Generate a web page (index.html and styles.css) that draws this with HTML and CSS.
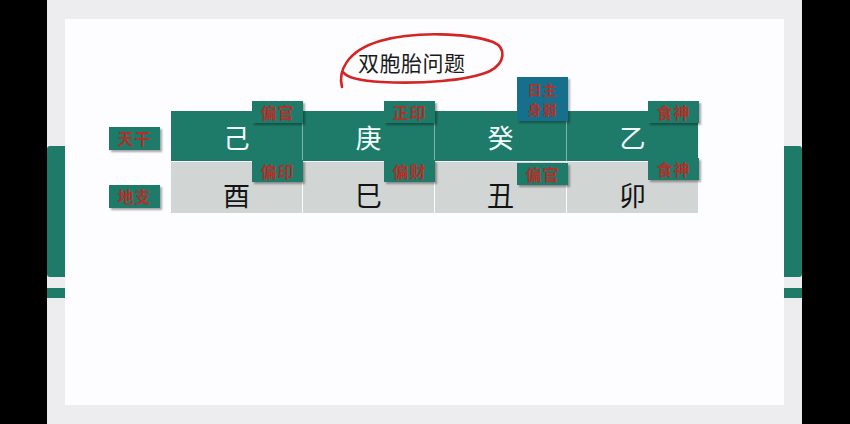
FILE: index.html
```html
<!DOCTYPE html>
<html lang="zh">
<head>
<meta charset="utf-8">
<title>双胞胎问题</title>
<link rel="stylesheet" href="styles.css">
</head>
<body>
<div class="frame">
  <div class="deco deco-left"></div>
  <div class="stripe stripe-left"></div>
  <div class="deco deco-right"></div>
  <div class="stripe stripe-right"></div>
  <div class="slide">
    <svg class="scribble" viewBox="65 19 719 386" width="719" height="386">
      <path d="M342,87 C338,72 346,51 380,41 C415,31 468,33 493,42 C507,48 505,63 490,71 C468,81 420,84 382,82 C362,81 347,78 343,72" fill="none" stroke="#d42525" stroke-width="2.6" stroke-linecap="round"/>
    </svg>
    <h1 class="title">双胞胎问题</h1>
    <div class="chart">
      <div class="row row-stem">
        <div class="label">天干</div>
        <div class="cells">
          <div class="cell">己<span class="badge">偏官</span></div>
          <div class="cell">庚<span class="badge">正印</span></div>
          <div class="cell">癸<span class="daymaster"><span class="dm-line">日主</span><span class="dm-line">身弱</span></span></div>
          <div class="cell">乙<span class="badge">食神</span></div>
        </div>
      </div>
      <div class="row row-branch">
        <div class="label">地支</div>
        <div class="cells">
          <div class="cell">酉<span class="badge badge-low">偏印</span></div>
          <div class="cell">巳<span class="badge badge-low">偏财</span></div>
          <div class="cell">丑<span class="badge badge-low badge-third">偏官</span></div>
          <div class="cell">卯<span class="badge badge-low badge-fourth">食神</span></div>
        </div>
      </div>
    </div>
  </div>
</div>
</body>
</html>
```

FILE: styles.css
```css
html, body {
  margin: 0;
  padding: 0;
  background: #000;
  width: 850px;
  height: 424px;
  overflow: hidden;
  font-family: "Noto Sans CJK SC", "Noto Sans", sans-serif;
}

.frame {
  position: relative;
  margin-left: 47px;
  width: 755px;
  height: 424px;
  background: #ededf0;
  padding: 19px 0 0 18px;
  box-sizing: border-box;
}

.deco {
  position: absolute;
  top: 146px;
  width: 18px;
  height: 131px;
  background: #1e7b69;
}
.deco-left {
  left: 0;
  border-radius: 3px 0 0 3px;
}
.deco-right {
  right: 0;
  border-radius: 0 3px 3px 0;
}

.stripe {
  position: absolute;
  top: 288px;
  width: 18px;
  height: 10px;
  background: #1e7b69;
}
.stripe-left { left: 0; }
.stripe-right { right: 0; }

.slide {
  position: relative;
  width: 719px;
  height: 386px;
  background: #fdfcfe;
  padding-top: 28px;
  box-sizing: border-box;
}

.scribble {
  position: absolute;
  left: 0;
  top: 0;
  pointer-events: none;
  z-index: 3;
}

.title {
  margin: 0 0 0 293px;
  font-size: 21px;
  font-weight: 400;
  line-height: 30px;
  color: #1a1a1a;
  letter-spacing: 0.5px;
}

.chart {
  margin: 34px 0 0 44px;
  display: flex;
  flex-direction: column;
  gap: 1px;
}

.row {
  display: flex;
  gap: 11px;
}

.label {
  width: 51px;
  height: 23px;
  background: #1e7b69;
  color: #b0302a;
  font-size: 16px;
  font-weight: 700;
  line-height: 23px;
  text-align: center;
  letter-spacing: 1px;
  box-shadow: 2px 2px 2px rgba(0, 0, 0, 0.35);
}
.row-stem .label { margin-top: 16px; }
.row-branch .label { margin-top: 23px; }

.cells {
  display: flex;
  gap: 1px;
}
.row-stem .cells { background: #7fb3a8; }
.row-branch .cells { background: #fdfcfe; }

.cell {
  position: relative;
  width: 131px;
  display: flex;
  align-items: center;
  justify-content: center;
  box-sizing: border-box;
}
.row-stem .cell {
  height: 50px;
  background: #1e7b69;
  color: #f4ffff;
  font-size: 26px;
}
.row-branch .cell {
  height: 51px;
  background: #d1d5d4;
  color: #141414;
  font-size: 27px;
  padding-top: 14px;
}

.badge {
  position: absolute;
  top: -10px;
  right: -1px;
  width: 51px;
  height: 22px;
  background: #1e7b69;
  color: #b0302a;
  font-size: 16px;
  font-weight: 700;
  line-height: 22px;
  text-align: center;
  letter-spacing: 1px;
  box-shadow: 2px 2px 2px rgba(0, 0, 0, 0.35);
  z-index: 2;
}
.badge-low { top: -2px; }
.badge-third { top: 1px; right: -2px; }
.badge-fourth { top: -4px; }

.daymaster {
  position: absolute;
  top: -34px;
  left: 82px;
  width: 51px;
  height: 44px;
  background: #17708b;
  color: #b0302a;
  font-size: 14px;
  font-weight: 700;
  padding-top: 3px;
  box-sizing: border-box;
  display: flex;
  flex-direction: column;
  align-items: center;
  gap: 0;
  letter-spacing: 1px;
  box-shadow: 2px 2px 2px rgba(0, 0, 0, 0.3);
  z-index: 2;
}
.dm-line {
  display: block;
  height: 20px;
  line-height: 19px;
}
```
